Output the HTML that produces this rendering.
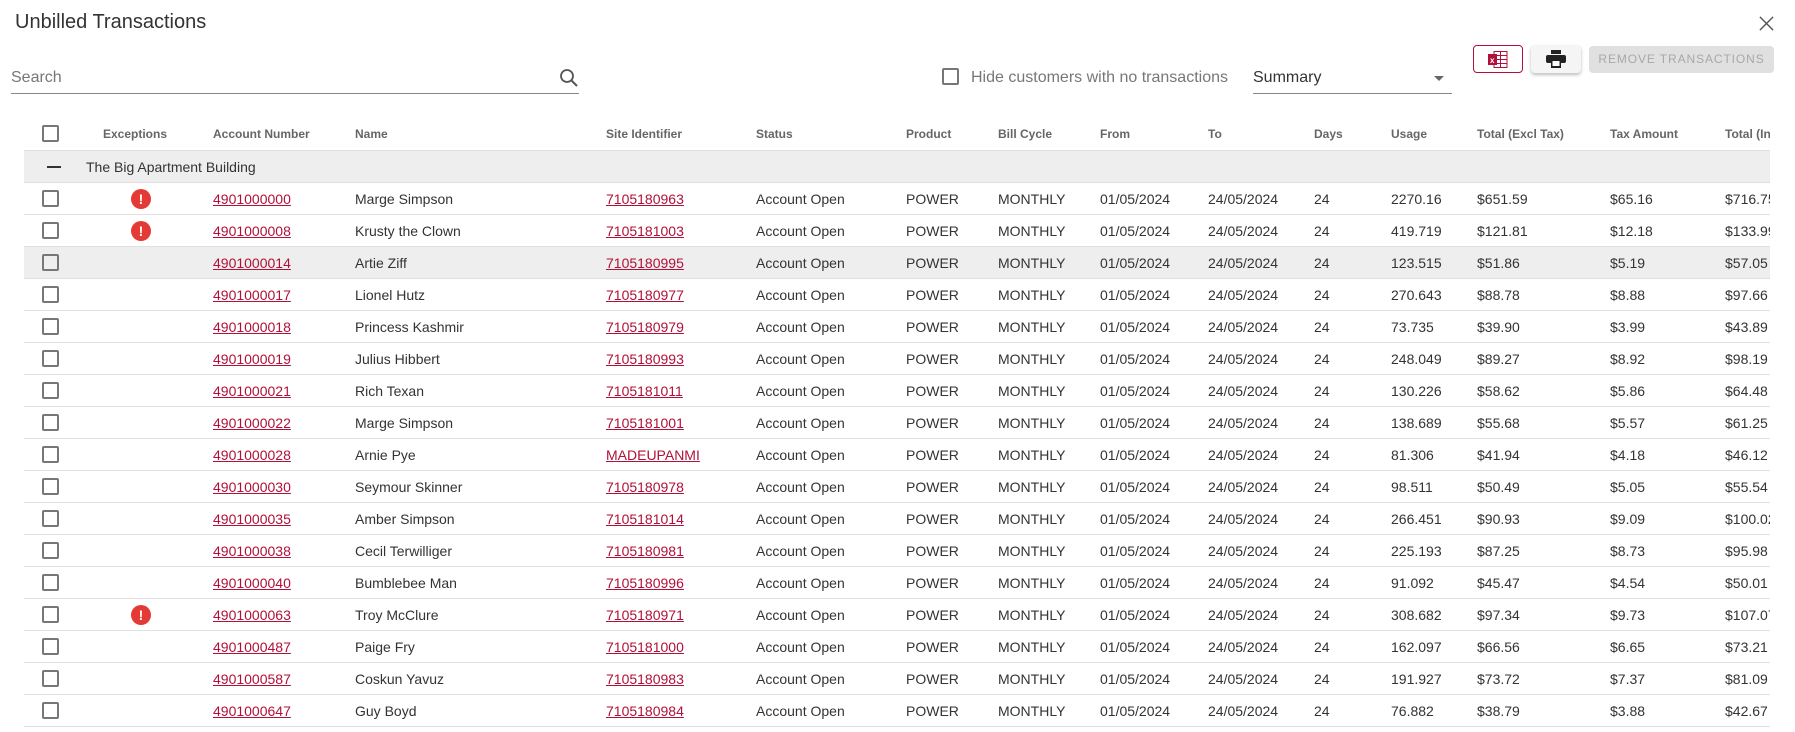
<!DOCTYPE html>
<html><head><meta charset="utf-8"><style>
*{box-sizing:border-box;margin:0;padding:0}
body{width:1795px;height:732px;overflow:hidden;background:#fff;font-family:"Liberation Sans",sans-serif;color:#333;position:relative}
.abs{position:absolute}
.title{left:15px;top:11px;font-size:20px;color:#333}
.close{left:1758px;top:15px;width:17px;height:17px}
.search{left:11px;top:62px;width:568px;height:32px;border-bottom:1px solid #888}
.search span{position:absolute;left:0;top:7px;font-size:16px;color:#777}
.cb{width:17px;height:17px;border:2px solid #777;border-radius:2px;position:absolute}
.wrap{left:24px;top:116px;width:1746px;height:616px;overflow:hidden}
.row{position:absolute;left:0;width:1746px;height:32px;border-bottom:1px solid #e0e0e0;font-size:14px;color:#333}
.row span{position:absolute;top:8px;white-space:nowrap}
.hdr{font-size:12px;color:#666;font-weight:bold;border-bottom:1px solid #e0e0e0}
.hdr span{top:11px}
a{color:#b0103a;text-decoration:underline}
.exc{position:absolute;left:107px;top:6px;width:20px;height:20px;border-radius:50%;background:#e53935;color:#fff;font-weight:bold;font-size:14px;text-align:center;line-height:20px}
</style></head><body>
<div class="abs title">Unbilled Transactions</div>
<svg class="abs close" viewBox="0 0 18 18"><path d="M2 2L16 16M16 2L2 16" stroke="#555" stroke-width="1.5"/></svg>
<div class="abs search"><span>Search</span>
<svg style="position:absolute;left:548px;top:6px" width="20" height="20" viewBox="0 0 20 20"><circle cx="8" cy="8" r="6" fill="none" stroke="#555" stroke-width="1.8"/><path d="M12.5 12.5L18 18" stroke="#555" stroke-width="2"/></svg></div>
<div class="cb" style="left:942px;top:68px"></div>
<div class="abs" style="left:971px;top:69px;font-size:16px;color:#777">Hide customers with no transactions</div>
<div class="abs" style="left:1253px;top:62px;width:199px;height:32px;border-bottom:1px solid #888"><span style="position:absolute;left:0;top:7px;font-size:16px;color:#333">Summary</span><span style="position:absolute;right:8px;top:14px;border-left:5px solid transparent;border-right:5px solid transparent;border-top:5px solid #666"></span></div>
<div class="abs" style="left:1473px;top:45px;width:50px;height:28px;border:1px solid #b0103a;border-radius:4px">
<svg style="position:absolute;left:14px;top:5px" width="20" height="17" viewBox="0 0 20 17"><rect x="6" y="0.5" width="13" height="16" fill="none" stroke="#b0103a"/><path d="M6 4.5H19M6 8.5H19M6 12.5H19M12.5 0.5V16.5" stroke="#b0103a"/><rect x="0" y="3" width="9" height="11" fill="#b0103a"/><text x="2" y="12" font-size="8" fill="#fff" font-family="Liberation Sans" font-weight="bold">x</text></svg></div>
<div class="abs" style="left:1531px;top:45px;width:50px;height:28px;border-radius:4px;background:#f5f5f5;box-shadow:0 2px 3px rgba(0,0,0,.25)">
<svg style="position:absolute;left:15px;top:5px" width="20" height="18" viewBox="0 0 20 18"><rect x="5" y="0" width="10" height="4" fill="#222"/><rect x="0" y="5" width="20" height="8" rx="2" fill="#222"/><rect x="5" y="10" width="10" height="8" fill="#222"/><rect x="6.5" y="11" width="7" height="5" fill="#fff"/></svg></div>
<div class="abs" style="left:1589px;top:46px;width:185px;height:27px;background:#e0e0e0;border-radius:4px;color:#a8a8a8;font-size:12px;letter-spacing:0.9px;text-align:center;line-height:27px">REMOVE TRANSACTIONS</div>
<div class="abs wrap">
<div class="row hdr" style="top:0;height:35px"><div class="cb" style="left:18px;top:9px"></div><span style="left:79px">Exceptions</span><span style="left:189px">Account Number</span><span style="left:331px">Name</span><span style="left:582px">Site Identifier</span><span style="left:732px">Status</span><span style="left:882px">Product</span><span style="left:974px">Bill Cycle</span><span style="left:1076px">From</span><span style="left:1184px">To</span><span style="left:1290px">Days</span><span style="left:1367px">Usage</span><span style="left:1453px">Total (Excl Tax)</span><span style="left:1586px">Tax Amount</span><span style="left:1701px">Total (Incl Tax)</span></div>
<div class="row" style="top:35px;background:#eee"><div style="position:absolute;left:23px;top:15px;width:14px;height:2px;background:#333"></div><span style="left:62px">The Big Apartment Building</span></div>
<div id="rows"></div>
</div>
<script>
var d=[["!","4901000000","Marge Simpson","7105180963","2270.16","$651.59","$65.16","$716.75"],
["!","4901000008","Krusty the Clown","7105181003","419.719","$121.81","$12.18","$133.99"],
["","4901000014","Artie Ziff","7105180995","123.515","$51.86","$5.19","$57.05"],
["","4901000017","Lionel Hutz","7105180977","270.643","$88.78","$8.88","$97.66"],
["","4901000018","Princess Kashmir","7105180979","73.735","$39.90","$3.99","$43.89"],
["","4901000019","Julius Hibbert","7105180993","248.049","$89.27","$8.92","$98.19"],
["","4901000021","Rich Texan","7105181011","130.226","$58.62","$5.86","$64.48"],
["","4901000022","Marge Simpson","7105181001","138.689","$55.68","$5.57","$61.25"],
["","4901000028","Arnie Pye","MADEUPANMI","81.306","$41.94","$4.18","$46.12"],
["","4901000030","Seymour Skinner","7105180978","98.511","$50.49","$5.05","$55.54"],
["","4901000035","Amber Simpson","7105181014","266.451","$90.93","$9.09","$100.02"],
["","4901000038","Cecil Terwilliger","7105180981","225.193","$87.25","$8.73","$95.98"],
["","4901000040","Bumblebee Man","7105180996","91.092","$45.47","$4.54","$50.01"],
["!","4901000063","Troy McClure","7105180971","308.682","$97.34","$9.73","$107.07"],
["","4901000487","Paige Fry","7105181000","162.097","$66.56","$6.65","$73.21"],
["","4901000587","Coskun Yavuz","7105180983","191.927","$73.72","$7.37","$81.09"],
["","4901000647","Guy Boyd","7105180984","76.882","$38.79","$3.88","$42.67"]];
var h="";d.forEach(function(r,i){h+='<div class="row" style="top:'+(67+i*32)+'px;'+(i==2?'background:#eee':'')+'"><div class="cb" style="left:18px;top:7px"></div>'+(r[0]?'<div class="exc">!</div>':'')+'<span style="left:189px"><a>'+r[1]+'</a></span><span style="left:331px">'+r[2]+'</span><span style="left:582px"><a>'+r[3]+'</a></span><span style="left:732px">Account Open</span><span style="left:882px">POWER</span><span style="left:974px">MONTHLY</span><span style="left:1076px">01/05/2024</span><span style="left:1184px">24/05/2024</span><span style="left:1290px">24</span><span style="left:1367px">'+r[4]+'</span><span style="left:1453px">'+r[5]+'</span><span style="left:1586px">'+r[6]+'</span><span style="left:1701px">'+r[7]+'</span></div>'});
document.getElementById("rows").innerHTML=h;
</script>
</body></html>
